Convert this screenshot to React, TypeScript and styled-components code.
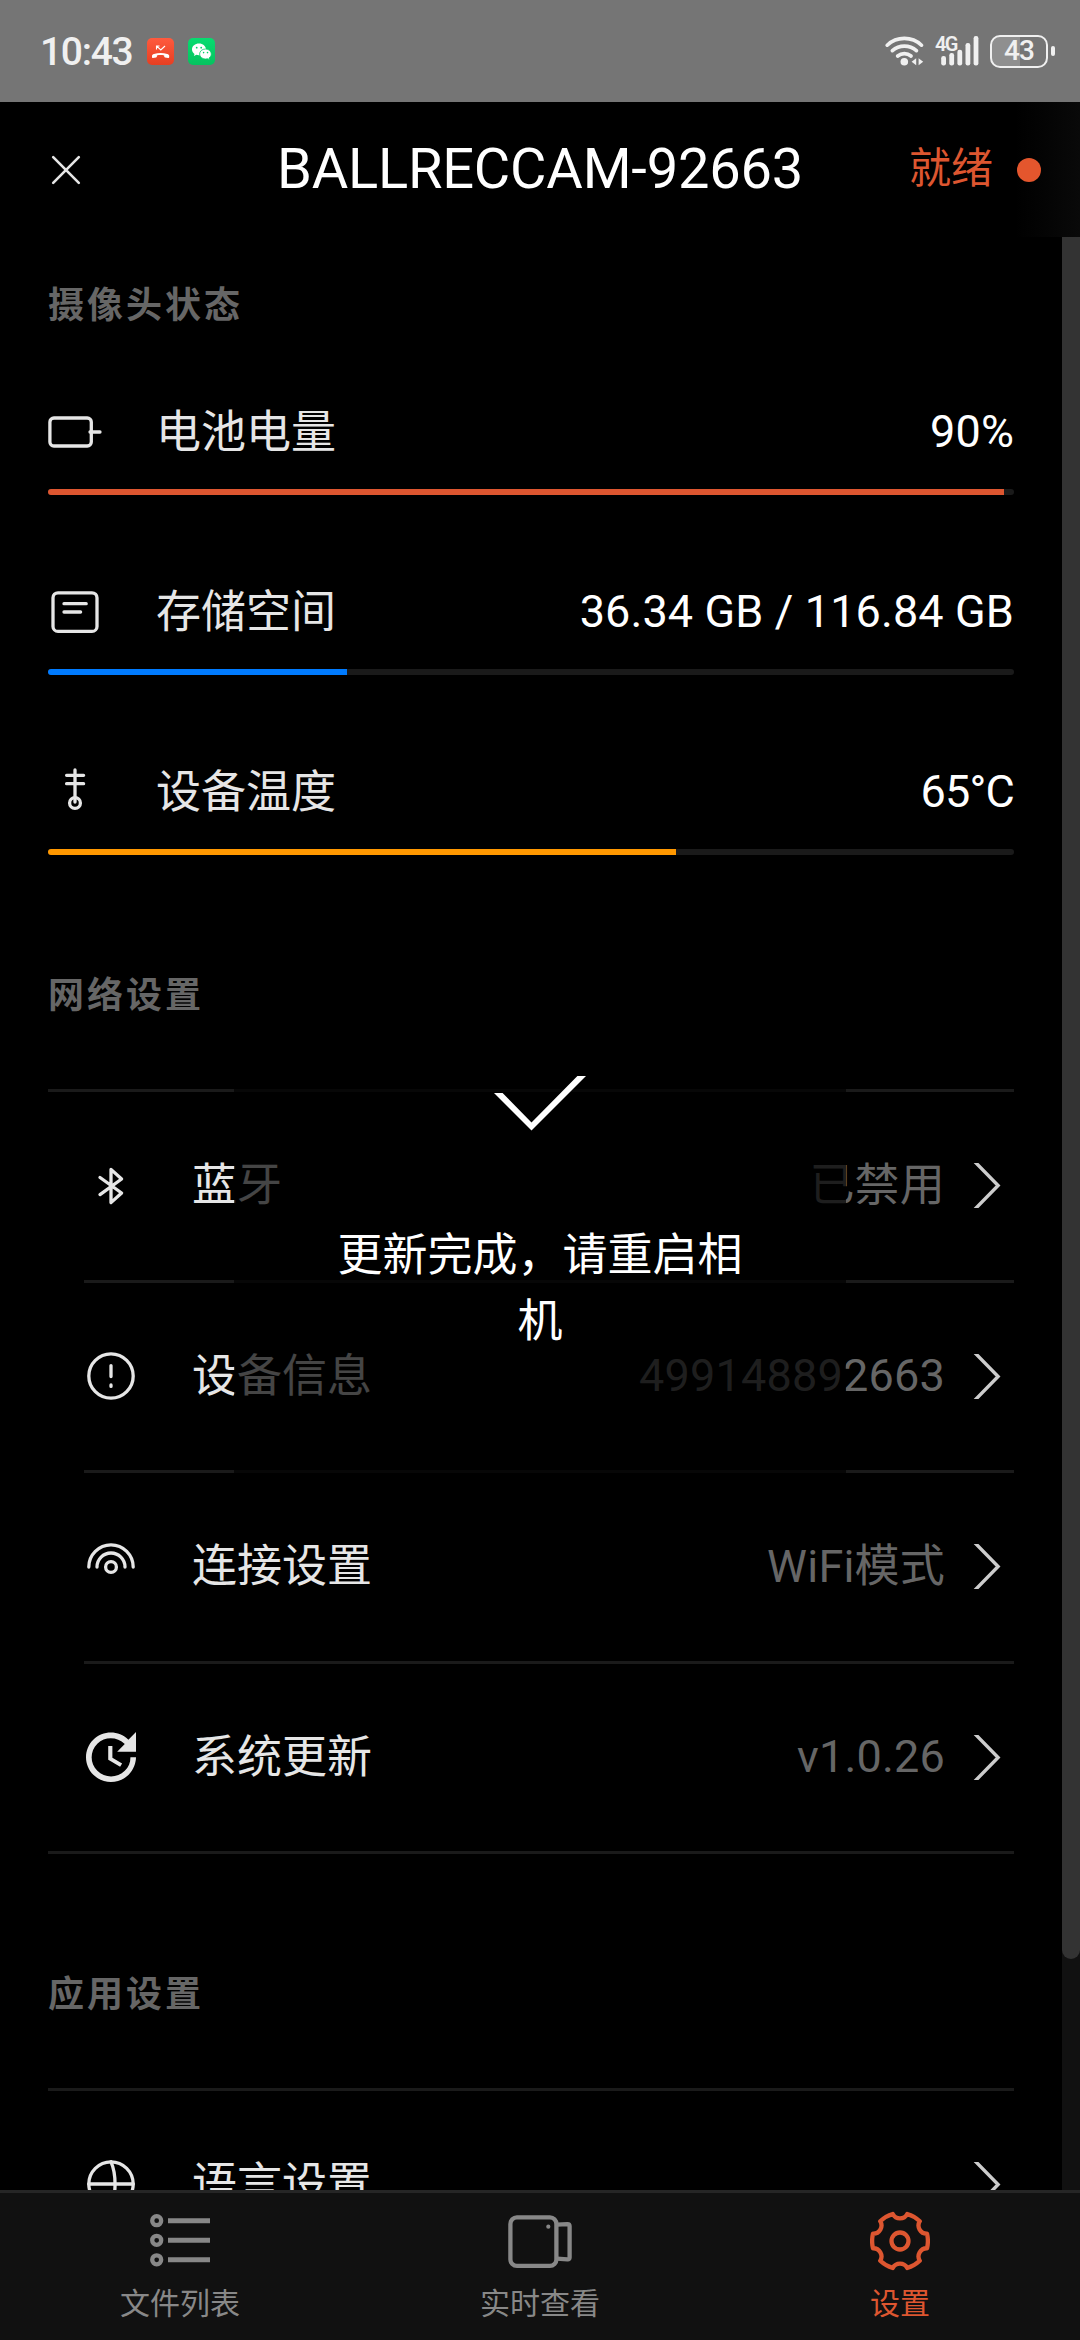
import React from "react";
import styled, { createGlobalStyle } from "styled-components";
import { MdUpdate } from "react-icons/md";

const ACCENT = "#dd5630";

const GlobalStyle = createGlobalStyle`
  html, body { margin: 0; padding: 0; background: #000; }
  * { box-sizing: border-box; }
  svg { display: block; flex: none; }
`;

const Screen = styled.div`
  position: relative;
  width: 1080px;
  height: 2340px;
  overflow: hidden;
  display: flex;
  flex-direction: column;
  background: #000;
  color: #e6e6e6;
  font-family: Roboto, "Noto Sans CJK SC", sans-serif;
`;

/* ---------- system status bar ---------- */

const StatusBar = styled.div`
  height: 102px;
  flex: none;
  background: #757575;
  color: #f0f0f0;
  display: flex;
  align-items: center;
  padding: 0 25px 0 40px;
`;

const Clock = styled.span`
  font-size: 39px;
  font-weight: 500;
  line-height: 46px;
  letter-spacing: -1.3px;
  width: 107px;
  padding-top: 1px;
`;

const AppBadge = styled.span<{ $from: string; $to: string }>`
  width: 27px;
  height: 27px;
  border-radius: 5px;
  margin-right: 14px;
  background: linear-gradient(${(p) => p.$from}, ${(p) => p.$to});
`;

const StatusRight = styled.div`
  margin-left: auto;
  display: flex;
  align-items: center;
`;

const Signal = styled.div`
  position: relative;
  width: 44px;
  height: 30px;
  margin: 0 11px 0 11px;
`;

const SignalKind = styled.span`
  position: absolute;
  left: 0;
  top: -1px;
  font-size: 20px;
  line-height: 18px;
  font-weight: 600;
  letter-spacing: -1.6px;
`;

const BatteryShell = styled.div`
  width: 58px;
  height: 33px;
  border: 2.4px solid #f0f0f0;
  border-radius: 10px;
  background: linear-gradient(90deg, #8f8f8f 0 51%, transparent 51%);
  display: flex;
  align-items: center;
  justify-content: center;
  font-size: 28px;
  font-weight: 500;
  line-height: 28px;
  letter-spacing: -0.8px;
`;

const BatteryTip = styled.span`
  width: 4px;
  height: 10px;
  border-radius: 2px;
  margin-left: 3px;
  background: #f0f0f0;
`;

/* ---------- header ---------- */

const Header = styled.header`
  height: 135px;
  flex: none;
  display: grid;
  grid-template-columns: 240px 1fr 240px;
  align-items: center;
  background: linear-gradient(90deg, #000 94%, #090909 100%);
`;

const CloseButton = styled.button`
  all: unset;
  padding-left: 51px;
`;

const Title = styled.h1`
  margin: 0;
  text-align: center;
  font-size: 56px;
  font-weight: 400;
  line-height: 64px;
  color: #fff;
  white-space: nowrap;
  padding-bottom: 2px;
  letter-spacing: -0.2px;
`;

const Ready = styled.div`
  display: flex;
  align-items: center;
  justify-content: flex-end;
  padding-right: 39px;
  color: ${ACCENT};
  font-size: 42px;
  line-height: 60px;
`;

const ReadyText = styled.span`
  padding-bottom: 2px;
`;

const ReadyDot = styled.span`
  width: 24px;
  height: 24px;
  border-radius: 50%;
  background: #e4562d;
  margin-left: 24px;
`;

/* ---------- scrolling content ---------- */

const Body = styled.div`
  flex: 1;
  min-height: 0;
  display: flex;
`;

const Content = styled.main`
  width: 1062px;
  height: 1953px;
  overflow: hidden;
  padding: 0 48px;
`;

const ScrollTrack = styled.div`
  width: 18px;
  height: 1953px;
  background: #111;
`;

const ScrollThumb = styled.div`
  height: 1722px;
  border-radius: 0 0 9px 9px;
  background: #333;
`;

const SectionTitle = styled.h2<{ $top: number; $bottom: number }>`
  margin: 0;
  padding-top: ${(p) => p.$top}px;
  padding-bottom: ${(p) => p.$bottom}px;
  font-size: 36px;
  font-weight: 700;
  line-height: 54px;
  letter-spacing: 3px;
  color: #666;
`;

const Meter = styled.section`
  height: 180px;
`;

const MeterHead = styled.div`
  display: flex;
  align-items: center;
  height: 54px;
  margin-bottom: 30px;
`;

const MeterLabel = styled.span`
  margin-left: 54px;
  font-size: 45px;
  line-height: 54px;
  color: #e6e6e6;
  padding-top: 2px;
`;

const MeterValue = styled.span<{ $tight?: boolean }>`
  margin-left: auto;
  font-size: 45px;
  line-height: 54px;
  letter-spacing: ${(p) => (p.$tight ? "-0.8px" : "0.12px")};
  color: #fff;
`;

const MeterTrack = styled.div`
  height: 6px;
  border-radius: 3px;
  background: #1a1a1a;
  overflow: hidden;
`;

const MeterFill = styled.div<{ $color: string }>`
  height: 100%;
  background: ${(p) => p.$color};
`;

const Group = styled.div`
  border-top: 3px solid #1a1a1a;
  border-bottom: 3px solid #1a1a1a;
`;

const Row = styled.div`
  margin-left: 36px;
  height: 190.6px;
  display: flex;
  align-items: center;
  padding-right: 12px;
  border-bottom: 3px solid #1a1a1a;
  &:last-child {
    border-bottom: 0;
    height: 187px;
  }
`;

const RowLabel = styled.span`
  margin-left: 54px;
  font-size: 45px;
  line-height: 54px;
  color: #e6e6e6;
  padding-top: 1px;
`;

const RowValue = styled.span`
  margin-left: auto;
  margin-right: 27px;
  font-size: 45px;
  line-height: 54px;
  letter-spacing: 0.2px;
  color: #666;
`;

/* ---------- tab bar ---------- */

const TabBar = styled.nav`
  height: 150px;
  flex: none;
  display: grid;
  grid-template-columns: repeat(3, 1fr);
  background: #111;
  border-top: 3px solid #262626;
`;

const Tab = styled.button<{ $active?: boolean }>`
  all: unset;
  display: flex;
  flex-direction: column;
  align-items: center;
  padding-top: 18px;
  gap: 11px;
  font-size: 30px;
  line-height: 44px;
  color: ${(p) => (p.$active ? ACCENT : "#888")};
`;

/* ---------- toast ---------- */

const Toast = styled.div`
  position: absolute;
  left: 234px;
  top: 951px;
  width: 612px;
  height: 540px;
  border-radius: 15px;
  background: rgba(0, 0, 0, 0.7);
  color: #fff;
  display: flex;
  flex-direction: column;
  align-items: center;
  padding: 125px 90px 0;
  font-size: 45px;
  line-height: 66px;
  text-align: center;
`;

const ToastText = styled.p`
  margin: 92px 0 0;
`;

/* ---------- icons ---------- */

const LineIcon = ({ children, w = 3.3 }: { children: React.ReactNode; w?: number }) => (
  <svg width="54" height="54" viewBox="0 0 54 54" fill="none" stroke="#e6e6e6" strokeWidth={w} strokeLinecap="round" strokeLinejoin="round">
    {children}
  </svg>
);

const BatteryIcon = () => (
  <LineIcon>
    <rect x="1.9" y="13" width="41.4" height="28" rx="4" />
    <path d="M42 27H52" />
  </LineIcon>
);

const StorageIcon = () => (
  <LineIcon>
    <rect x="5" y="7.8" width="44" height="38.6" rx="5" />
    <path d="M16 18.7H38.2M16 27H32.6" />
  </LineIcon>
);

const ThermoIcon = () => (
  <LineIcon>
    <path d="M27 5V37M18.6 10.3H35.6M18.6 18.7H35.6" />
    <circle cx="27" cy="38" r="5.4" />
  </LineIcon>
);

const BluetoothIcon = () => (
  <LineIcon>
    <path d="M16 18.5L37.6 34L27 43.6V10.4L37.6 20L16 35.6" />
  </LineIcon>
);

const InfoIcon = () => (
  <LineIcon>
    <circle cx="27" cy="27" r="22.2" />
    <path d="M27 16.6V27.6M27 36V37.4" />
  </LineIcon>
);

const ConnectIcon = () => (
  <LineIcon>
    <circle cx="27" cy="27" r="5.4" />
    <path d="M4.8 27a22.2 22.2 0 0 1 44.4 0M13 27a14 14 0 0 1 28 0" />
  </LineIcon>
);

const GlobeIcon = () => (
  <LineIcon>
    <circle cx="27" cy="27" r="22.2" />
    <path d="M4.8 27H49.2M27 4.8C32.4 17 32.4 37 27 49.2" />
  </LineIcon>
);

const UpdateIcon = () => <MdUpdate size={54} color="#e6e6e6" viewBox="2.28 2.28 19.44 19.44" />;

const Chevron = () => (
  <svg width="30" height="45" viewBox="0 0 30 45" fill="none" stroke="#ccc" strokeWidth="3.4">
    <path d="M2.1 -2L26.1 22.5L2.1 47" />
  </svg>
);

const PhoneGlyph = () => (
  <svg width="27" height="27" viewBox="0 0 27 27">
    <path d="M9.5 11.5V8H12.5M9.8 8.2L13.8 12L18 8" fill="none" stroke="#fff" strokeWidth="1.1" />
    <path d="M5 19.2v-1.4c0-1 .8-1.500 2-1.800 4.300-1.300 9-1.300 13.200 0 1.200.3 2 .8 2 1.800v1.400c0 .5-.4.9-.9.800l-3.300-.6c-.5-.1-.8-.4-.8-.9v-1c-2.400-.6-5-.6-7.300 0v1c0 .5-.3.800-.8.900l-3.300.6c-.5.1-.8-.3-.8-.8z" fill="#fff" />
  </svg>
);

const WeChatGlyph = () => (
  <svg width="27" height="27" viewBox="0 0 27 27">
    <path d="M11 5.500c-3.900 0-7 2.600-7 5.900 0 1.800 1 3.400 2.500 4.500l-.6 2.200 2.500-1.300c.8.300 1.700.4 2.600.4 3.900 0 7-2.600 7-5.800s-3.100-5.900-7-5.900z" fill="#fff" />
    <path d="M17.500 11c-3.300 0-5.900 2.200-5.900 5s2.600 5 5.900 5c.7 0 1.400-.1 2-.3l2 1.100-.5-1.800c1.400-.9 2.300-2.300 2.300-4 0-2.800-2.500-5-5.800-5z" fill="#fff" stroke="#06cf68" strokeWidth=".8" />
    <g fill="#06cf68">
      <circle cx="8.700" cy="9.700" r=".9" /><circle cx="13.200" cy="9.700" r=".9" />
      <circle cx="15.600" cy="14.600" r=".8" /><circle cx="19.500" cy="14.600" r=".8" />
    </g>
  </svg>
);

const WifiIcon = () => (
  <svg width="39" height="30" viewBox="0 0 39 30" fill="none" stroke="#f0f0f0" strokeWidth="3.600" strokeLinecap="round">
    <path d="M2.200 9.200a25 25 0 0 1 34.300 0M7.400 14.700a18 18 0 0 1 24 0M12.700 20a10.500 10.500 0 0 1 13.300 0" />
    <circle cx="19.300" cy="25.800" r="3.800" fill="#f0f0f0" stroke="none" />
    <path d="M31.200 22.300v7l-4.600-3.500zM33.600 22.300v7l4.600-3.500z" fill="#f0f0f0" stroke="none" />
  </svg>
);

const SignalBars = () => (
  <svg width="44" height="30" viewBox="0 0 44 30" fill="#f0f0f0">
    {[20, 17, 13.7, 7, 0].map((y, i) => (
      <rect key={i} x={6.2 + i * 8.1} y={y} width="4.800" height={29.5 - y} rx="2.200" />
    ))}
  </svg>
);

const ListIcon = () => (
  <svg width="60" height="60" viewBox="0 0 60 60" fill="none" stroke="currentColor">
    {[9.7, 29.3, 48.8].map((y) => (
      <g key={y}>
        <circle cx="6.700" cy={y} r="4.500" strokeWidth="4.300" />
        <path d={`M18 ${y}H60`} strokeWidth="5" />
      </g>
    ))}
  </svg>
);

const CameraIcon = () => (
  <svg width="64" height="60" viewBox="0 0 64 60" fill="none" stroke="currentColor" strokeWidth="4.300" strokeLinejoin="round">
    <rect x="2.400" y="6.400" width="46" height="48.500" rx="6.500" />
    <path d="M48.800 13.600L59.500 13.100Q61.600 13.100 61.600 15.200V46.400Q61.600 48.600 59.500 48.400L48.800 47.600" />
    <circle cx="40.300" cy="15.700" r="2.100" fill="currentColor" stroke="none" />
  </svg>
);

// Six-lobed cog: outer lobes joined by concave notches.
const cogPath = (() => {
  const pt = (deg: number, r: number) => {
    const a = (deg * Math.PI) / 180;
    return `${(30 + r * Math.cos(a)).toFixed(2)} ${(30 + r * Math.sin(a)).toFixed(2)}`;
  };
  let d = `M${pt(-15, 28)}`;
  for (let i = 0; i < 6; i++) {
    const base = i * 60;
    d += `A32 32 0 0 1 ${pt(base + 15, 28)}`;
    d += `A8.200 8.200 0 0 0 ${pt(base + 45, 28)}`;
  }
  return d + "Z";
})();

const CogIcon = () => (
  <svg width="60" height="60" viewBox="0 0 60 60" fill="none" stroke="currentColor" strokeWidth="4.300" strokeLinejoin="round">
    <path d={cogPath} />
    <circle cx="30" cy="30" r="8.500" />
  </svg>
);

/* ---------- data ---------- */

const meters = [
  { icon: <BatteryIcon />, label: "电池电量", value: "90%", fill: 98.96, color: ACCENT },
  { icon: <StorageIcon />, label: "存储空间", value: "36.34 GB / 116.84 GB", fill: 31, color: "#007bff" },
  { icon: <ThermoIcon />, label: "设备温度", value: "65°C", fill: 65, color: "#ff9800", tight: true },
];

const networkRows = [
  { icon: <BluetoothIcon />, label: "蓝牙", value: "已禁用" },
  { icon: <InfoIcon />, label: "设备信息", value: "499148892663" },
  { icon: <ConnectIcon />, label: "连接设置", value: "WiFi模式" },
  { icon: <UpdateIcon />, label: "系统更新", value: "v1.0.26" },
];

const appRows = [{ icon: <GlobeIcon />, label: "语言设置", value: "" }];

const Rows = ({ items }: { items: typeof networkRows }) => (
  <Group>
    {items.map((r) => (
      <Row key={r.label}>
        {r.icon}
        <RowLabel>{r.label}</RowLabel>
        <RowValue>{r.value}</RowValue>
        <Chevron />
      </Row>
    ))}
  </Group>
);

export default function App() {
  return (
    <Screen>
      <GlobalStyle />
      <StatusBar>
        <Clock>10:43</Clock>
        <AppBadge $from="#ff5a3e" $to="#e63f22"><PhoneGlyph /></AppBadge>
        <AppBadge $from="#07dc70" $to="#06c25f"><WeChatGlyph /></AppBadge>
        <StatusRight>
          <WifiIcon />
          <Signal>
            <SignalBars />
            <SignalKind>4G</SignalKind>
          </Signal>
          <BatteryShell>43</BatteryShell>
          <BatteryTip />
        </StatusRight>
      </StatusBar>

      <Header>
        <CloseButton aria-label="关闭">
          <svg width="30" height="30" viewBox="0 0 30 30" stroke="#e6e6e6" strokeWidth="2.600" strokeLinecap="round">
            <path d="M2.200 2.200L27.800 27.800M27.800 2.200L2.200 27.800" />
          </svg>
        </CloseButton>
        <Title>BALLRECCAM-92663</Title>
        <Ready>
          <ReadyText>就绪</ReadyText>
          <ReadyDot />
        </Ready>
      </Header>

      <Body>
        <Content>
          <SectionTitle $top={42} $bottom={72}>摄像头状态</SectionTitle>
          {meters.map((m) => (
            <Meter key={m.label}>
              <MeterHead>
                {m.icon}
                <MeterLabel>{m.label}</MeterLabel>
                <MeterValue $tight={m.tight}>{m.value}</MeterValue>
              </MeterHead>
              <MeterTrack>
                <MeterFill $color={m.color} style={{ width: `${m.fill}%` }} />
              </MeterTrack>
            </Meter>
          ))}
          <SectionTitle $top={24} $bottom={66}>网络设置</SectionTitle>
          <Rows items={networkRows} />
          <SectionTitle $top={114} $bottom={66}>应用设置</SectionTitle>
          <Rows items={appRows} />
        </Content>
        <ScrollTrack>
          <ScrollThumb />
        </ScrollTrack>
      </Body>

      <TabBar>
        <Tab><ListIcon />文件列表</Tab>
        <Tab><CameraIcon />实时查看</Tab>
        <Tab $active><CogIcon />设置</Tab>
      </TabBar>

      <Toast>
        <svg width="92" height="55" viewBox="0 0 92 55" fill="#fff">
          <path d="M0 17H8.600L37.500 46.500L83.400 0H92L37.500 54.500Z" />
        </svg>
        <ToastText>更新完成，请重启相机</ToastText>
      </Toast>
    </Screen>
  );
}
